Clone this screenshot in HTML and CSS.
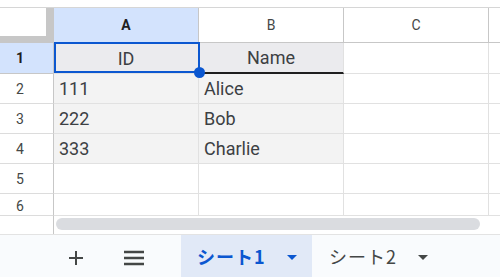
FILE: index.html
```html
<!DOCTYPE html>
<html lang="ja">

<head>
    <meta charset="UTF-8">
    <meta name="viewport" content="width=device-width, initial-scale=1.0">
    <title>Sheet</title>
    <link rel="stylesheet" href="styles.css">
</head>

<body>
    <div class="sheet">
        <div class="grid">
            <div class="corner"></div>
            <div class="col-head current">A</div>
            <div class="col-head">B</div>
            <div class="col-head">C</div>
            <div class="col-head rest"></div>

            <div class="row-head current">1</div>
            <div class="cell head-cell">ID</div>
            <div class="cell head-cell name">Name</div>
            <div class="cell"></div>
            <div class="cell rest"></div>

            <div class="row-head">2</div>
            <div class="cell band">111</div>
            <div class="cell band">Alice</div>
            <div class="cell"></div>
            <div class="cell rest"></div>

            <div class="row-head">3</div>
            <div class="cell band">222</div>
            <div class="cell band">Bob</div>
            <div class="cell"></div>
            <div class="cell rest"></div>

            <div class="row-head">4</div>
            <div class="cell band">333</div>
            <div class="cell band">Charlie</div>
            <div class="cell"></div>
            <div class="cell rest"></div>

            <div class="row-head">5</div>
            <div class="cell"></div>
            <div class="cell"></div>
            <div class="cell"></div>
            <div class="cell rest"></div>

            <div class="row-head last">6</div>
            <div class="cell"></div>
            <div class="cell"></div>
            <div class="cell"></div>
            <div class="cell rest"></div>

            <!-- 選択中のセル A1 -->
            <div class="selection"><span class="handle"></span></div>
        </div>

        <div class="hscroll">
            <div class="stub"></div>
            <div class="track">
                <div class="thumb"></div>
            </div>
        </div>

        <div class="tabbar">
            <a href="#" class="tool">
                <svg width="16" height="16" viewBox="0 0 16 16">
                    <path d="M8 1v14M1 8h14" stroke="#444746" stroke-width="2" fill="none" />
                </svg>
            </a>
            <a href="#" class="tool">
                <svg width="20" height="16" viewBox="0 0 20 16">
                    <path d="M0 2h20M0 8h20M0 14h20" stroke="#444746" stroke-width="2.4" fill="none" />
                </svg>
            </a>
            <a href="#" class="tab active">
                <span>シート1</span>
                <i class="caret"></i>
            </a>
            <a href="#" class="tab">
                <span>シート2</span>
                <i class="caret"></i>
            </a>
        </div>
    </div>
</body>

</html>
```

FILE: styles.css
```css
* {
    margin: 0;
    padding: 0;
    box-sizing: border-box;
}

body {
    background-color: #fff;
    font-family: Roboto, "Liberation Sans", Arial, sans-serif;
    color: #3c4043;
    overflow: hidden;
}

a {
    color: inherit;
    text-decoration: none;
}

.sheet {
    width: 500px;
    height: 277px;
    padding-top: 7px;
    display: flex;
    flex-direction: column;
}

/* 表 */
.grid {
    position: relative;
    display: grid;
    grid-template-columns: 54px 145px 145px 145px 1fr;
    grid-template-rows: 35px 31px 30px 30px 30px 30px 22px;
    border-top: 1px solid #d6d6d6;
}

.corner {
    border-right: 8px solid #c7c7c7;
    border-bottom: 7px solid #c7c7c7;
    background-color: #fff;
}

.col-head {
    display: flex;
    align-items: center;
    justify-content: center;
    font-size: 14px;
    color: #444746;
    border-right: 1px solid #c7c7c7;
    border-bottom: 1px solid #c7c7c7;
}

.col-head.rest {
    border-right: none;
}

.col-head.current {
    background-color: #d3e3fd;
    color: #1f1f1f;
    font-weight: bold;
}

.row-head {
    display: flex;
    align-items: center;
    justify-content: center;
    padding-right: 13px;
    font-size: 14px;
    color: #444746;
    border-right: 1px solid #c7c7c7;
    border-bottom: 1px solid #dcdcdc;
}

.row-head.current {
    background-color: #d3e3fd;
    color: #1f1f1f;
    font-weight: bold;
    border-bottom-color: #c7c7c7;
}

.row-head.last {
    align-items: flex-end;
    padding-bottom: 1px;
}

.cell {
    display: flex;
    align-items: center;
    padding-left: 5px;
    font-size: 18px;
    color: #3c4043;
    border-right: 1px solid #e1e1e1;
    border-bottom: 1px solid #e1e1e1;
    white-space: nowrap;
}

.cell.rest {
    border-right: none;
}

.cell.band {
    background-color: #f3f3f3;
}

.cell.head-cell {
    justify-content: center;
    padding-left: 0;
    background-color: #ebebee;
}

.cell.name {
    border-bottom: 2px solid #1f1f1f;
}

.selection {
    position: absolute;
    left: 54px;
    top: 34px;
    width: 146px;
    height: 31px;
    border: 2px solid #0b57d0;
}

.selection .handle {
    position: absolute;
    right: -7px;
    bottom: -7px;
    width: 11px;
    height: 11px;
    border-radius: 50%;
    background-color: #0b57d0;
}

/* 横スクロール */
.hscroll {
    display: flex;
    height: 19px;
    border-bottom: 1px solid #e3e3e3;
}

.hscroll .stub {
    width: 54px;
    border-right: 1px solid #c7c7c7;
}

.hscroll .track {
    flex: 1;
    padding: 2px 20px 0 2px;
}

.hscroll .thumb {
    height: 12px;
    border-radius: 6px;
    background-color: #dadce0;
}

/* シートタブ */
.tabbar {
    flex: 1;
    display: flex;
    align-items: stretch;
    padding-left: 58px;
    background-color: #f9fbfd;
}

.tool {
    display: flex;
    align-items: center;
    justify-content: center;
    width: 36px;
    padding-top: 3px;
}

.tool + .tool {
    margin-left: 22px;
}

.tab {
    display: flex;
    align-items: center;
    gap: 21px;
    padding: 0 16px 0 17px;
    font-family: "Noto Sans CJK JP", sans-serif;
    font-size: 18px;
    letter-spacing: 1px;
    color: #444746;
}

.tab.active {
    justify-content: space-between;
    margin-left: 29px;
    width: 131px;
    padding: 0 15px 0 16px;
    background-color: #e1e9f7;
    color: #0b57d0;
    font-weight: bold;
}

.caret {
    width: 0;
    height: 0;
    margin-top: 3px;
    border-left: 5px solid transparent;
    border-right: 5px solid transparent;
    border-top: 5px solid currentColor;
}
```
